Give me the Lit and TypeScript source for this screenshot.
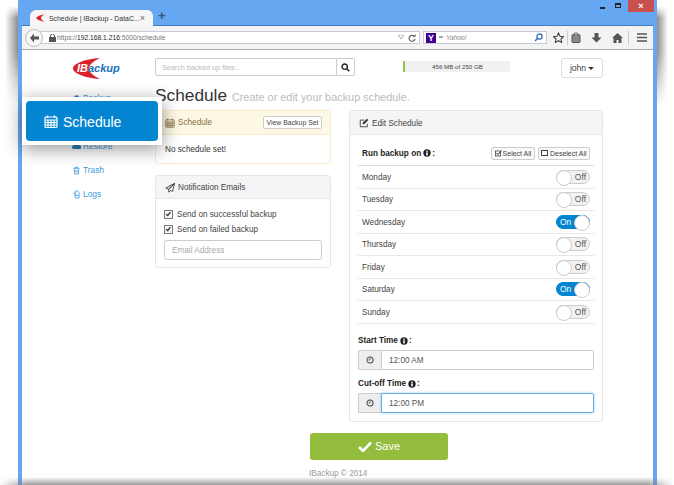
import { LitElement, html, css, svg } from "lit";
import { customElement } from "lit/decorators.js";

const info = html`<svg class="info" viewBox="0 0 10 10"><circle cx="5" cy="5" r="4.6" fill="#222"/><rect x="4" y="4.2" width="2" height="3.8" fill="#fff"/><rect x="4" y="2" width="2" height="1.5" fill="#fff"/></svg>`;
const clock = html`<svg class="clock" viewBox="0 0 10 10"><circle cx="5" cy="5" r="3.8" fill="none" stroke="#444" stroke-width="1.3"/><path d="M5 2.8V5H3.2" fill="none" stroke="#444" stroke-width="1"/></svg>`;
const cal = (c: string, w = 1) => svg`<g fill="none" stroke="${c}" stroke-width="${w}"><rect x="1" y="2.5" width="12" height="10.5" rx="1"/><path d="M1 5.500h12M1 8h12M1 10.500h12M4 5.500V13M7 5.500V13M10 5.500V13"/></g><path d="M3.500 1v2.500M10.500 1v2.500" stroke="${c}" stroke-width="1.500"/>`;
const days: [string, boolean][] = [["Monday", false], ["Tuesday", false], ["Wednesday", true], ["Thursday", false], ["Friday", false], ["Saturday", true], ["Sunday", false]];
const tick = html`<span class="box"><svg viewBox="0 0 9 9"><path d="M1.500 4 3.500 6 7 1.500" fill="none" stroke="#222" stroke-width="1.500"/></svg></span>`;

@customElement("app-root")
export class AppRoot extends LitElement {
  static styles = css`
    :host { display: block; width: 674px; height: 485px; position: relative; overflow: hidden; background: #fff; font-family: "Liberation Sans", Arial, sans-serif; font-size: 8.2px; color: #444; }
    * { box-sizing: border-box; }
    .glow { position: absolute; left: 5px; width: 663px; top: 6px; height: 100px; background: linear-gradient(90deg, transparent 0, #8c8c8c 13px, #8c8c8c 652px, transparent); -webkit-mask-image: linear-gradient(transparent, #000 12%, #000 45%, transparent); }
    .win { position: relative; margin-left: 18px; width: 639px; height: 490px; border: solid #65a7f0; border-width: 0 4px; display: flex; flex-direction: column; background: #fff; }
    .title { height: 26px; flex: none; background: #65a7f0; display: flex; align-items: flex-end; padding-left: 8px; border-bottom: 1px solid #3f7cc4; position: relative; }
    .tab { width: 123px; height: 16px; background: #f7f7f7; border-radius: 6px 6px 0 0; display: flex; align-items: center; padding: 0 8px 0 6px; font-size: 6.9px; color: #333; white-space: nowrap; margin-bottom: -1px; }
    .tab svg { margin-right: 4px; flex: none; }
    .tab span { flex: 1; }
    .tab b { font-weight: normal; color: #666; font-size: 9px; }
    .plus { color: #33507a; font-size: 13px; font-weight: bold; margin: 0 0 1px 5px; line-height: 16px; }
    .ctrls { position: absolute; right: -1px; top: 0; display: flex; align-items: flex-start; }
    .min { width: 5px; height: 2px; background: #222; margin: 7px 10px 0 0; }
    .max { width: 6px; height: 5px; border: 1px solid #222; border-top-width: 2px; margin: 3px 7px 0 0; }
    .close { width: 26px; height: 12px; background: #c9504f; color: #fff; font-size: 9px; font-weight: bold; text-align: center; line-height: 12px; }
    .nav { height: 24px; flex: none; background: #f3f3f3; border-bottom: 1px solid #aaa; display: flex; align-items: center; padding-left: 3px; }
    .back { width: 18px; height: 18px; border-radius: 50%; background: #f8f8f8; border: 1px solid #bbb; display: flex; align-items: center; justify-content: center; flex: none; margin-right: -4px; position: relative; }
    .bar { height: 13px; background: #fff; border: 1px solid #c4ccd6; display: flex; align-items: center; font-size: 6.7px; color: #777; }
    .bar svg { flex: none; }
    .url { width: 381px; padding-left: 9px; gap: 1px; }
    .url span { flex: 1; white-space: nowrap; }
    .url b { color: #222; font-weight: normal; }
    .srch { width: 124px; margin-left: 3px; padding-left: 2px; gap: 3px; }
    .srch i { flex: 1; color: #888; }
    .y { width: 10px; height: 10px; background: #400090; color: #fff; font-size: 9px; line-height: 10px; text-align: center; font-weight: bold; }
    .tools { display: flex; align-items: center; margin-left: 6px; }
    .tools svg, .tools .sep { flex: none; }
    .sep { width: 1px; height: 14px; background: #ccc; }
    .page { flex: 1; padding: 8px 0 0 50px; position: relative; }
    .head { display: flex; align-items: flex-start; height: 27px; }
    .logo { width: 83px; height: 22px; flex: none; }
    .logo text { font-family: "Liberation Sans", sans-serif; font-weight: bold; font-style: italic; font-size: 11px; }
    .search { display: flex; width: 200px; flex: none; }
    .search div { height: 18px; border: 1px solid #ccc; display: flex; align-items: center; justify-content: center; }
    .search .in { width: 182px; border-radius: 2px 0 0 2px; justify-content: flex-start; padding-left: 6px; color: #bbb; font-size: 7.2px; }
    .search .b { width: 18px; border-left: 0; border-radius: 0 2px 2px 0; }
    .prog { width: 107px; height: 11px; margin: 3px 0 0 48px; background: #f1f1f1; border-left: 2px solid #8dc63f; border-radius: 1px; text-align: center; font-size: 6.2px; line-height: 11px; color: #444; }
    .john { width: 42px; height: 20px; margin-left: 51px; border: 1px solid #ddd; border-radius: 3px; display: flex; align-items: center; justify-content: center; gap: 2px; font-size: 8.6px; }
    .caret { border: 3px solid transparent; border-top-color: #333; border-bottom-width: 0; }
    .body { display: flex; }
    .side { width: 83px; flex: none; display: flex; flex-direction: column; gap: 10.1px; padding-top: 6px; color: #3a9bdc; font-size: 8.4px; }
    .side div { height: 14px; display: flex; align-items: center; gap: 2px; }
    .side svg { width: 9px; height: 9px; flex: none; }
    .main { width: 448px; }
    h1 { margin: 0; height: 25px; font-size: 17.3px; font-weight: normal; color: #333; line-height: 21px; white-space: nowrap; }
    h1 small { font-size: 10.9px; color: #bbb; }
    .cols { display: flex; gap: 18px; align-items: flex-start; }
    .left { width: 176px; display: flex; flex-direction: column; gap: 11px; }
    .right { width: 254px; }
    .panel { border: 1px solid #e6e6e6; border-radius: 3px; }
    .ph { height: 24px; background: #f5f5f5; border-bottom: 1px solid #e6e6e6; display: flex; align-items: center; padding: 1px 8px 0 9px; gap: 3px; }
    .ph svg { width: 10px; height: 10px; flex: none; }
    .short { height: 23px; }
    .warn { border-color: #faebcc; }
    .warn .ph { background: #fcf8e3; border-color: #faebcc; color: #8a6d3b; padding-top: 0; }
    .vbs { margin-left: auto; width: 59px; height: 13px; background: #fff; border: 1px solid #ccc; border-radius: 2px; color: #444; font-size: 6.9px; line-height: 11px; text-align: center; white-space: nowrap; }
    .warn .txt { padding: 10px 9px; height: 28px; line-height: 9px; color: #333; }
    .form { padding: 7.5px 8px 7px; }
    .chk { display: flex; align-items: center; gap: 3px; height: 15px; white-space: nowrap; }
    .box { width: 9px; height: 9px; border: 1px solid #777; background: #f6f6f6; margin-right: 1px; flex: none; display: flex; }
    .email { height: 20px; margin-top: 3px; border: 1px solid #ccc; border-radius: 3px; padding: 0 7px; line-height: 19px; color: #aaa; }
    .rb { padding: 9px 8px 8px; }
    .runrow { display: flex; align-items: center; height: 22px; padding: 0 4px 3px; border-bottom: 1px solid #ddd; font-weight: bold; color: #222; gap: 1px; }
    .info { width: 8px; height: 8px; flex: none; margin-left: 1px; }
    .sel { height: 13px; border: 1px solid #ccc; border-radius: 2px; font-weight: normal; color: #444; font-size: 7px; display: flex; align-items: center; justify-content: center; gap: 1px; background: #fafafa; white-space: nowrap; }
    .sel i { width: 6.5px; height: 6.5px; border: 1px solid #444; display: block; margin-right: 1px; }
    .sa { margin-left: auto; width: 44px; }
    .da { margin-left: 2px; width: 52px; }
    .day { height: 22.5px; display: flex; align-items: center; justify-content: space-between; padding: 1px 4px 0; border-bottom: 1px solid #e8e8e8; }
    .day:last-of-type { border-bottom: 0; }
    .tg { width: 34px; height: 14px; margin-top: -1px; border-radius: 7px; border: 1px solid #ccc; background: #f2f2f2; position: relative; font-size: 8.5px; line-height: 13px; color: #555; text-align: right; padding-right: 3px; }
    .tg::after { content: ""; position: absolute; left: -1px; top: -1px; width: 14px; height: 14px; border-radius: 50%; background: #fff; border: 1px solid #ccc; }
    .tg.on { background: #0485d1; border-color: #0485d1; color: #fff; text-align: left; padding: 0 0 0 3px; }
    .tg.on::after { left: auto; right: -1px; }
    .lbl { font-weight: bold; color: #222; display: flex; align-items: center; gap: 1px; height: 12px; margin-bottom: 3px; }
    .first { margin-top: 11px; }
    .ig { display: flex; height: 20px; margin-bottom: 8px; }
    .ig:last-child { margin-bottom: 0; }
    .ad { width: 23px; background: #eee; border: 1px solid #ccc; border-right: 0; border-radius: 2px 0 0 2px; display: flex; align-items: center; justify-content: center; }
    .clock { width: 8px; height: 8px; }
    .fld { flex: 1; border: 1px solid #ccc; border-radius: 0 2px 2px 0; padding-left: 7px; line-height: 19px; color: #555; }
    .focus { border-color: #66afe9; box-shadow: 0 0 3px rgba(102,175,233,.6); }
    .save { width: 138px; height: 27px; margin: 11px 0 0 155px; background: #94bc3d; border-radius: 3px; color: #fff; font-size: 11px; display: flex; align-items: center; justify-content: center; gap: 3px; }
    .foot { margin: 9px 0 0 154px; color: #999; line-height: 10px; }
    .call { position: absolute; left: 22px; top: 97px; width: 140px; height: 48px; padding: 4px; background: #fff; box-shadow: 0 4px 18px rgba(0,0,0,.42); }
    .call div { height: 40px; background: #0485d1; border-radius: 4px; color: #fff; font-size: 14px; display: flex; align-items: center; gap: 5px; padding: 1px 0 0 18px; }
    .call svg { width: 14px; height: 15px; flex: none; }
    .fade { position: absolute; left: 0; right: 0; bottom: 0; height: 8px; background: linear-gradient(rgba(130,130,130,0), rgba(130,130,130,.8)); -webkit-mask-image: linear-gradient(90deg, transparent, #000 4%, #000 96%, transparent); }
  `;

  render() {
    return html`
      <div class="glow"></div>
      <div class="win">
        <div class="title">
          <div class="tab">
            <svg width="9" height="8" viewBox="0 0 9 8"><path d="M9 .5C5 .5 2 2 0 4c2 2 5 3.500 9 3.500C6 6.500 5 5.300 5 4s1-2.500 4-3.500z" fill="#e01f26"/></svg>
            <span>Schedule | IBackup - DataC...</span><b>×</b>
          </div>
          <div class="plus">+</div>
          <div class="ctrls"><div class="min"></div><div class="max"></div><div class="close">×</div></div>
        </div>
        <div class="nav">
          <div class="back"><svg width="11" height="10" viewBox="0 0 11 10"><path d="M5 .5 1 5l4 4.500V6.500h5v-3H5z" fill="#555"/></svg></div>
          <div class="bar url">
            <svg width="7" height="8" viewBox="0 0 7 8"><rect y="3" width="7" height="5" fill="#555"/><path d="M1.500 3V2a2 2 0 0 1 4 0v1" fill="none" stroke="#555"/></svg>
            <span>https://<b>192.168.1.216</b>:5000/schedule</span>
            <svg width="6" height="5" viewBox="0 0 6 5"><path d="M0 0h6L3 4z" fill="none" stroke="#aaa"/></svg>
            <svg style="margin:0 3px 0 3px" width="8" height="8" viewBox="0 0 8 8"><path d="M6.500 2.500A3 3 0 1 0 7 5" fill="none" stroke="#666" stroke-width="1.200"/><path d="M4.500 2.800H7.500V0z" fill="#666"/></svg>
          </div>
          <div class="bar srch">
            <div class="y">Y</div><svg width="4" height="3" viewBox="0 0 4 3"><path d="M0 1h4" stroke="#555"/></svg><i>Yahoo!</i>
            <svg style="margin-right:3px" width="9" height="9" viewBox="0 0 9 9"><circle cx="5.500" cy="3.500" r="2.600" fill="none" stroke="#2a6fb5" stroke-width="1.300"/><path d="M3.500 5.500 1 8" stroke="#2a6fb5" stroke-width="1.600"/></svg>
          </div>
          <div class="tools">
            <svg width="11" height="11" viewBox="0 0 11 11"><path d="M5.500 1 7 4.200l3.500.4L8 7l.7 3.500-3.200-1.800L2.300 10.500 3 7 .5 4.600 4 4.200z" fill="none" stroke="#444" stroke-width="1.100"/></svg>
            <div class="sep" style="margin:0 3px"></div>
            <svg width="10" height="11" viewBox="0 0 10 11"><rect x="1" y="2.500" width="8" height="8" rx="1" fill="#888" stroke="#555"/><rect x="3.500" y="1" width="3" height="2" fill="#ddd" stroke="#555" stroke-width=".7"/></svg>
            <svg style="margin-left:10px" width="11" height="11" viewBox="0 0 11 11"><path d="M3.500 1h4v4.500H10.500L5.500 10.500.5 5.500h3z" fill="#555"/></svg>
            <svg style="margin-left:10px" width="11" height="10" viewBox="0 0 11 10"><path d="M5.500 0 11 5H9.500v5h-3V7h-2v3h-3V5H0z" fill="#555"/></svg>
            <div class="sep" style="margin-left:5px"></div>
            <svg style="margin-left:8px" width="10" height="9" viewBox="0 0 10 9"><path d="M0 1h10M0 4.500h10M0 8h10" stroke="#555" stroke-width="1.600"/></svg>
          </div>
        </div>
        <div class="page">
          <div class="head">
            <svg class="logo" viewBox="0 0 83 22">
              <path d="M28 0C12 1 1 6 1 10.500 1 15 12 20 28 21 20 17 17 14 17 10.500S20 4 28 0z" fill="#d8232a"/>
              <text x="5" y="14" fill="#fff">IB</text><text x="16" y="14" fill="#1c6fb8">ackup</text>
            </svg>
            <div class="search">
              <div class="in">Search backed up files...</div>
              <div class="b"><svg width="9" height="9" viewBox="0 0 9 9"><circle cx="3.700" cy="3.700" r="2.700" fill="none" stroke="#222" stroke-width="1.400"/><path d="M5.700 5.700 8.300 8.300" stroke="#222" stroke-width="1.600"/></svg></div>
            </div>
            <div class="prog">456 MB of 250 GB</div>
            <div class="john">john<span class="caret"></span></div>
          </div>
          <div class="body">
            <div class="side">
              <div><svg viewBox="0 0 14 14"><path d="M3 11a3 3 0 0 1 0-6 4.500 4.500 0 0 1 8.500 0 3 3 0 0 1 0 6z" fill="#2c7fb8"/></svg>Backup</div>
              <div></div>
              <div><svg viewBox="0 0 14 14"><path d="M3 11a3 3 0 0 1 0-6 4.500 4.500 0 0 1 8.500 0 3 3 0 0 1 0 6z" fill="#2c7fb8"/></svg>Restore</div>
              <div><svg viewBox="0 0 14 14"><path d="M2.500 3.500h9M5 3.500V2h4v1.500M3.500 3.500l.5 9h6l.5-9M6 6v4M8 6v4" fill="none" stroke="#3a9bdc" stroke-width="1.200"/></svg>Trash</div>
              <div><svg viewBox="0 0 14 14"><path d="M5 1.500h4l2 2v5H5zM2 5h3v7.500h6v-4" fill="none" stroke="#3a9bdc" stroke-width="1.200"/></svg>Logs</div>
            </div>
            <div class="main">
              <h1>Schedule <small>Create or edit your backup schedule.</small></h1>
              <div class="cols">
                <div class="left">
                  <div class="panel warn">
                    <div class="ph"><svg viewBox="0 0 14 14">${cal("#8a6d3b")}</svg>Schedule<span class="vbs">View Backup Set</span></div>
                    <div class="txt">No schedule set!</div>
                  </div>
                  <div class="panel">
                    <div class="ph short"><svg viewBox="0 0 12 12"><path d="M11.500.5 1 6l3 1.500zM11.500.5 4.500 8v3l2-2 2.500 1z" fill="none" stroke="#333"/></svg>Notification Emails</div>
                    <div class="form">
                      <div class="chk">${tick}Send on successful backup</div>
                      <div class="chk">${tick}Send on failed backup</div>
                      <div class="email">Email Address</div>
                    </div>
                  </div>
                </div>
                <div class="right panel">
                  <div class="ph"><svg viewBox="0 0 12 12"><path d="M10 7v3.500H1.500V2.500H6" fill="none" stroke="#333"/><path d="M4.500 5.500 9.500.8l1.700 1.700-5 5H4.500z" fill="#333"/></svg>Edit Schedule</div>
                  <div class="rb">
                    <div class="runrow">Run backup on${info}:
                      <span class="sel sa"><svg width="7" height="7" viewBox="0 0 7 7"><rect x=".5" y="1" width="5" height="5" fill="none" stroke="#444" stroke-width=".8"/><path d="M1.500 3 3 4.500 6.500.5" fill="none" stroke="#222" stroke-width="1"/></svg>Select All</span>
                      <span class="sel da"><i></i>Deselect All</span>
                    </div>
                    ${days.map(([d, on]) => html`<div class="day">${d}<span class="tg ${on ? "on" : ""}">${on ? "On" : "Off"}</span></div>`)}
                    <div class="lbl first">Start Time${info}:</div>
                    <div class="ig"><div class="ad">${clock}</div><div class="fld">12:00 AM</div></div>
                    <div class="lbl">Cut-off Time${info}:</div>
                    <div class="ig"><div class="ad">${clock}</div><div class="fld focus">12:00 PM</div></div>
                  </div>
                </div>
              </div>
              <div class="save"><svg width="14" height="11" viewBox="0 0 14 11"><path d="M1 6 5 10 13 1.500" fill="none" stroke="#fff" stroke-width="2.600"/></svg>Save</div>
              <div class="foot">IBackup © 2014</div>
            </div>
          </div>
        </div>
      </div>
      <div class="call"><div><svg viewBox="0 0 14 14">${cal("#fff", 1.2)}</svg>Schedule</div></div>
      <div class="fade"></div>
    `;
  }
}
